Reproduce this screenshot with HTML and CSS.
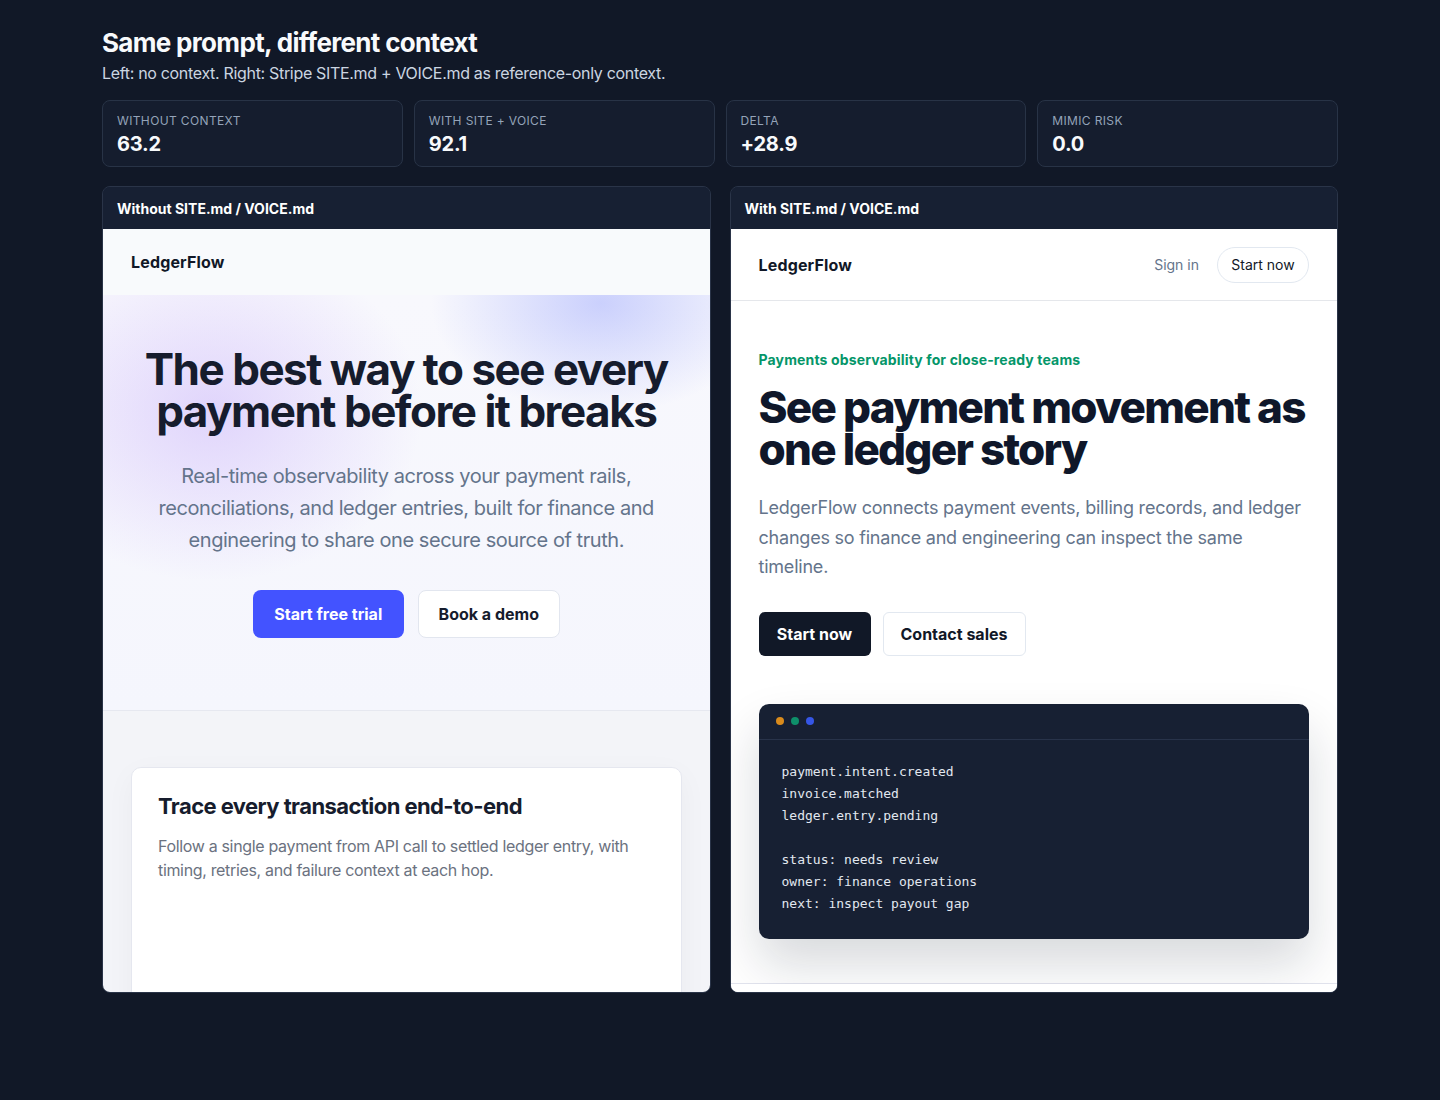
FILE: index.html
```html
<!DOCTYPE html>
<html lang="en">
<head>
<meta charset="utf-8">
<title>Same prompt, different context</title>
<link rel="stylesheet" href="styles.css">
</head>
<body>
<main class="wrap">
  <h1 class="title">Same prompt, different context</h1>
  <p class="subtitle">Left: no context. Right: Stripe SITE.md + VOICE.md as reference-only context.</p>

  <section class="stats">
    <div class="stat"><div class="stat-label">Without context</div><div class="stat-value">63.2</div></div>
    <div class="stat"><div class="stat-label">With SITE + VOICE</div><div class="stat-value">92.1</div></div>
    <div class="stat"><div class="stat-label">Delta</div><div class="stat-value">+28.9</div></div>
    <div class="stat"><div class="stat-label">Mimic risk</div><div class="stat-value">0.0</div></div>
  </section>

  <section class="panels">
    <article class="panel">
      <header class="panel-head">Without SITE.md / VOICE.md</header>
      <div class="frame frame-a">
        <nav class="a-nav"><span class="brand">LedgerFlow</span></nav>
        <section class="a-hero">
          <h2 class="a-h1">The best way to see every payment before it breaks</h2>
          <p class="a-lead">Real-time observability across your payment rails, reconciliations, and ledger entries, built for finance and engineering to share one secure source of truth.</p>
          <div class="a-actions">
            <a class="a-btn a-btn-primary">Start free trial</a>
            <a class="a-btn a-btn-ghost">Book a demo</a>
          </div>
        </section>
        <section class="a-features">
          <div class="a-card">
            <h3 class="a-card-title">Trace every transaction end-to-end</h3>
            <p class="a-card-text">Follow a single payment from API call to settled ledger entry, with timing, retries, and failure context at each hop.</p>
          </div>
        </section>
      </div>
    </article>

    <article class="panel">
      <header class="panel-head">With SITE.md / VOICE.md</header>
      <div class="frame frame-b">
        <nav class="b-nav">
          <span class="brand">LedgerFlow</span>
          <div class="b-nav-right">
            <a class="b-signin">Sign in</a>
            <a class="b-pill">Start now</a>
          </div>
        </nav>
        <section class="b-hero">
          <p class="b-eyebrow">Payments observability for close-ready teams</p>
          <h2 class="b-h1">See payment movement as one ledger story</h2>
          <p class="b-lead">LedgerFlow connects payment events, billing records, and ledger changes so finance and engineering can inspect the same timeline.</p>
          <div class="b-actions">
            <a class="b-btn b-btn-dark">Start now</a>
            <a class="b-btn b-btn-ghost">Contact sales</a>
          </div>
          <div class="code">
            <div class="code-bar">
              <span class="dot dot-amber"></span>
              <span class="dot dot-green"></span>
              <span class="dot dot-blue"></span>
            </div>
<pre class="code-body">payment.intent.created
invoice.matched
ledger.entry.pending

status: needs review
owner: finance operations
next: inspect payout gap</pre>
          </div>
        </section>
        <section class="b-next"></section>
      </div>
    </article>
  </section>
</main>
</body>
</html>
```

FILE: styles.css
```css
* { box-sizing: border-box; }

html, body {
  margin: 0;
  padding: 0;
  background: #111827;
  font-family: Inter, "Noto Sans", "Liberation Sans", sans-serif;
  color: #f8fafc;
}

.wrap {
  width: 1236px;
  margin: 0 auto;
  padding-top: 27px;
}

.title {
  margin: 0;
  font-size: 26px;
  line-height: 31px;
  font-weight: 700;
  letter-spacing: -0.026em;
  color: #f8fafc;
}

.subtitle {
  margin: 4px 0 0;
  font-size: 16px;
  line-height: 22px;
  letter-spacing: -0.02em;
  color: #cbd5e1;
}

.stats {
  margin-top: 16px;
  display: grid;
  grid-template-columns: repeat(4, 1fr);
  gap: 11px;
}

.stat {
  height: 67px;
  background: #151d2e;
  border: 1px solid #283346;
  border-radius: 8px;
  padding: 13px 14px;
}

.stat-label {
  font-size: 12px;
  line-height: 14px;
  text-transform: uppercase;
  letter-spacing: 0.03em;
  color: #94a3b8;
}

.stat-value {
  margin-top: 4px;
  font-size: 20px;
  line-height: 24px;
  font-weight: 700;
  letter-spacing: -0.01em;
  color: #f8fafc;
}

.panels {
  margin-top: 19px;
  display: grid;
  grid-template-columns: 1fr 1fr;
  gap: 19px;
}

.panel {
  border: 1px solid #2a3448;
  border-radius: 8px;
  overflow: hidden;
  background: #172033;
}

.panel-head {
  height: 42px;
  padding: 0 14px;
  display: flex;
  align-items: center;
  font-size: 14px;
  font-weight: 700;
  color: #ffffff;
  background: #172033;
}

.frame {
  height: 763px;
  overflow: hidden;
  background: #ffffff;
}

.brand {
  font-size: 16px;
  font-weight: 700;
  letter-spacing: 0.01em;
  color: #111827;
}

a { text-decoration: none; cursor: pointer; }

/* ---------- Left page ---------- */
.frame-a { background: #f3f4f8; }

.a-nav {
  height: 66px;
  padding: 0 28px;
  display: flex;
  align-items: center;
  background: #f8fafc;
}

.a-hero {
  padding: 53px 28px 72px;
  text-align: center;
  border-bottom: 1px solid #e6e8f0;
  background:
    radial-gradient(ellipse 210px 170px at 18% 28%, rgba(196, 170, 250, 0.45), rgba(196, 170, 250, 0) 100%),
    radial-gradient(ellipse 170px 110px at 82% 2%, rgba(165, 175, 252, 0.55), rgba(165, 175, 252, 0) 100%),
    linear-gradient(180deg, #f8f8fd 0%, #f5f6fd 100%);
}

.a-h1 {
  margin: 0;
  font-size: 44px;
  line-height: 42px;
  font-weight: 700;
  letter-spacing: -0.034em;
  color: #161c2d;
}

.a-lead {
  margin: 28px auto 0;
  max-width: 540px;
  font-size: 20px;
  line-height: 32px;
  letter-spacing: -0.022em;
  color: #64748b;
}

.a-actions {
  margin-top: 34px;
  display: flex;
  justify-content: center;
  gap: 14px;
}

.a-btn {
  height: 48px;
  display: inline-flex;
  align-items: center;
  justify-content: center;
  border-radius: 8px;
  font-size: 16px;
  font-weight: 700;
}

.a-btn-primary {
  width: 151px;
  background: #4353ff;
  color: #ffffff;
}

.a-btn-ghost {
  width: 142px;
  background: #ffffff;
  border: 1px solid #e2e6ef;
  color: #161c2d;
}

.a-features {
  padding: 56px 28px 0;
}

.a-card {
  height: 300px;
  background: #ffffff;
  border: 1px solid #e5e7ef;
  border-radius: 10px;
  padding: 24px 26px;
  box-shadow: 0 8px 30px rgba(15, 23, 42, 0.04);
}

.a-card-title {
  margin: 0;
  font-size: 22px;
  line-height: 28px;
  font-weight: 700;
  letter-spacing: -0.026em;
  color: #161c2d;
}

.a-card-text {
  margin: 14px 0 0;
  font-size: 16px;
  line-height: 24px;
  letter-spacing: -0.021em;
  color: #6b7280;
}

/* ---------- Right page ---------- */
.b-nav {
  height: 72px;
  padding: 0 28px;
  display: flex;
  align-items: center;
  justify-content: space-between;
  border-bottom: 1px solid #e5e7eb;
  background: #ffffff;
}

.b-nav-right {
  display: flex;
  align-items: center;
  gap: 18px;
}

.b-signin {
  font-size: 14px;
  color: #64748b;
}

.b-pill {
  height: 36px;
  width: 92px;
  display: inline-flex;
  align-items: center;
  justify-content: center;
  border: 1px solid #e2e8f0;
  border-radius: 18px;
  font-size: 14px;
  color: #111827;
}

.b-hero {
  padding: 49px 28px 44px;
  border-bottom: 1px solid #e2e4ee;
  background: #ffffff;
}

.b-eyebrow {
  margin: 0;
  font-size: 14px;
  line-height: 20px;
  font-weight: 700;
  letter-spacing: 0.01em;
  color: #059669;
}

.b-h1 {
  margin: 16px 0 0;
  font-size: 44px;
  line-height: 42px;
  font-weight: 800;
  letter-spacing: -0.04em;
  color: #0f172a;
}

.b-lead {
  margin: 23px 0 0;
  font-size: 18px;
  line-height: 29.5px;
  letter-spacing: -0.012em;
  color: #64748b;
}

.b-actions {
  margin-top: 30px;
  display: flex;
  gap: 12px;
}

.b-btn {
  height: 44px;
  display: inline-flex;
  align-items: center;
  justify-content: center;
  border-radius: 6px;
  font-size: 16px;
  font-weight: 700;
}

.b-btn-dark {
  width: 112px;
  background: #111827;
  color: #ffffff;
}

.b-btn-ghost {
  width: 143px;
  background: #ffffff;
  border: 1px solid #e2e8f0;
  color: #111827;
}

.code {
  margin-top: 48px;
  background: #172033;
  border-radius: 10px;
  box-shadow: 0 26px 50px rgba(15, 23, 42, 0.16);
  overflow: hidden;
}

.code-bar {
  height: 36px;
  padding: 0 17px;
  display: flex;
  align-items: center;
  gap: 7px;
  border-bottom: 1px solid #28334a;
}

.dot {
  width: 8px;
  height: 8px;
  border-radius: 50%;
}

.dot-amber { background: #d98b1c; }
.dot-green { background: #0e8f6a; }
.dot-blue { background: #3656e6; }

.code-body {
  margin: 0;
  padding: 21px 23px 24px;
  font-family: "DejaVu Sans Mono", "Liberation Mono", monospace;
  font-size: 13px;
  line-height: 22px;
  color: #e2e8f0;
}

.b-next {
  height: 40px;
  background: #ffffff;
}
```
